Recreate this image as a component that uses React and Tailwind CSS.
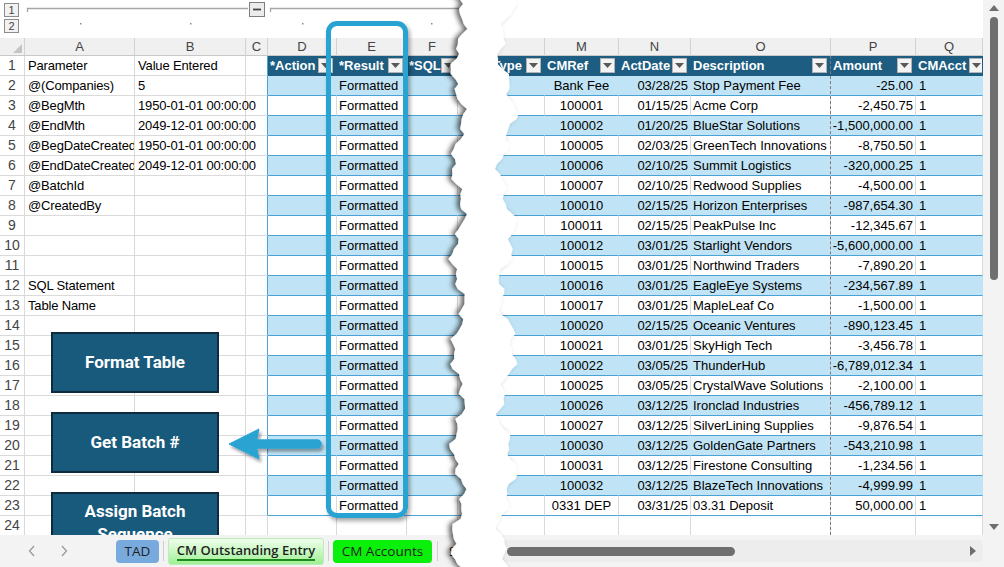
import React from 'react';

const paramNames = {
  1: 'Parameter', 2: '@(Companies)', 3: '@BegMth', 4: '@EndMth', 5: '@BegDateCreated',
  6: '@EndDateCreated', 7: '@BatchId', 8: '@CreatedBy', 12: 'SQL Statement', 13: 'Table Name',
};
const paramValues = {
  1: 'Value Entered', 2: '5', 3: '1950-01-01 00:00:00', 4: '2049-12-01 00:00:00',
  5: '1950-01-01 00:00:00', 6: '2049-12-01 00:00:00',
};

const txns = [
  ['Bank Fee', '03/28/25', 'Stop Payment Fee', '-25.00'],
  ['100001', '01/15/25', 'Acme Corp', '-2,450.75'],
  ['100002', '01/20/25', 'BlueStar Solutions', '-1,500,000.00'],
  ['100005', '02/03/25', 'GreenTech Innovations', '-8,750.50'],
  ['100006', '02/10/25', 'Summit Logistics', '-320,000.25'],
  ['100007', '02/10/25', 'Redwood Supplies', '-4,500.00'],
  ['100010', '02/15/25', 'Horizon Enterprises', '-987,654.30'],
  ['100011', '02/15/25', 'PeakPulse Inc', '-12,345.67'],
  ['100012', '03/01/25', 'Starlight Vendors', '-5,600,000.00'],
  ['100015', '03/01/25', 'Northwind Traders', '-7,890.20'],
  ['100016', '03/01/25', 'EagleEye Systems', '-234,567.89'],
  ['100017', '03/01/25', 'MapleLeaf Co', '-1,500.00'],
  ['100020', '02/15/25', 'Oceanic Ventures', '-890,123.45'],
  ['100021', '03/01/25', 'SkyHigh Tech', '-3,456.78'],
  ['100022', '03/05/25', 'ThunderHub', '-6,789,012.34'],
  ['100025', '03/05/25', 'CrystalWave Solutions', '-2,100.00'],
  ['100026', '03/12/25', 'Ironclad Industries', '-456,789.12'],
  ['100027', '03/12/25', 'SilverLining Supplies', '-9,876.54'],
  ['100030', '03/12/25', 'GoldenGate Partners', '-543,210.98'],
  ['100031', '03/12/25', 'Firestone Consulting', '-1,234.56'],
  ['100032', '03/12/25', 'BlazeTech Innovations', '-4,999.99'],
  ['0331 DEP', '03/31/25', '03.31 Deposit', '50,000.00'],
];

const rows = Array.from({ length: 24 }, (_, i) => i + 1);

const CELL = 'h-[20px] shrink-0 border-r border-b flex items-center whitespace-nowrap';
const GRID = 'border-r-[#dadada] border-b-[#dadada]';
const COLHEAD = 'h-[18px] shrink-0 border-r border-r-[#d2d2d2] flex items-center justify-center text-[13px] text-[#444]';

// table styling per sheet row
const tableCls = (n) => {
  if (n === 1) return 'bg-[#1d5d82] border-r-[#1d5d82] border-b-[#1d5d82] text-white font-bold';
  if (n >= 2 && n <= 23 && n % 2 === 0) return 'bg-[#c0e4f5] border-r-[#c0e4f5] border-b-[#4aa3d6]';
  if (n >= 2 && n <= 23) return 'border-r-[#dadada] border-b-[#4aa3d6]';
  return GRID;
};

const FilterBtn = ({ className = 'ml-auto' }) => (
  <span className={`mr-[3px] flex h-[15px] w-[15px] shrink-0 items-center justify-center border border-[#b3b3b3] bg-[#f3f3f3] ${className}`}>
    <svg width="9" height="5" viewBox="0 0 9 5"><path d="M0 0h9L4.5 5z" fill="#595959" /></svg>
  </span>
);

const LeftPane = () => (
  <div className="flex w-[472px] shrink-0 flex-col">
    {/* outline area */}
    <div className="flex h-[38px] shrink-0">
      <div className="flex w-[25px] shrink-0 flex-col gap-[2px] pl-[4px] pt-[3px]">
        {['1', '2'].map((t) => (
          <div key={t} className="flex h-[14px] w-[15px] items-center justify-center border border-[#8c8c8c] bg-[#f2f2f2] text-[11px] leading-none text-[#444]">{t}</div>
        ))}
      </div>
      <svg width="447" height="38" viewBox="0 0 447 38">
        <path d="M2.5 12V8.5H223M245.5 12V8.5H447" stroke="#a6a6a6" strokeWidth="1.3" fill="none" />
        <rect x="224.5" y="2.5" width="15" height="14" fill="#ececec" stroke="#7d7d7d" />
        <path d="M228 9.5h8" stroke="#444" strokeWidth="1.8" />
        {[55, 165, 277, 406].map((x) => <rect key={x} x={x} y="23" width="1.5" height="1.5" fill="#8a8a8a" />)}
      </svg>
    </div>
    {/* column letters */}
    <div className="flex h-[18px] shrink-0 border-b border-[#c8c8c8] bg-[#f0f0f0]">
      <div className="relative w-[25px] shrink-0 border-r border-[#d2d2d2]">
        <svg className="absolute bottom-[2px] right-[2px]" width="9" height="9"><path d="M9 0V9H0z" fill="#c4c4c4" /></svg>
      </div>
      <div className={`${COLHEAD} w-[110px]`}>A</div>
      <div className={`${COLHEAD} w-[111px]`}>B</div>
      <div className={`${COLHEAD} w-[22px]`}>C</div>
      <div className={`${COLHEAD} w-[69px]`}>D</div>
      <div className={`${COLHEAD} w-[70px]`}>E</div>
      <div className={`${COLHEAD} w-[51px]`}>F</div>
      <div className={`${COLHEAD} w-[14px]`} />
    </div>
    {rows.map((n) => {
      const t = tableCls(n);
      const inTbl = n <= 23;
      return (
        <div key={n} className="flex h-[20px] shrink-0">
          <div className={`${CELL} ${GRID} w-[25px] justify-center text-[14px] text-[#444]`}>{n}</div>
          <div className={`${CELL} ${GRID} w-[110px] overflow-hidden pl-[3px] tracking-[-0.15px]`}>{paramNames[n]}</div>
          <div className={`${CELL} ${GRID} w-[111px] pl-[3px] tracking-[-0.15px]`}>{paramValues[n]}</div>
          <div className={`${CELL} w-[22px] border-b-[#dadada] ${inTbl ? 'border-r-[#4aa3d6]' : 'border-r-[#dadada]'}`} />
          <div className={`${CELL} ${t} w-[69px] pl-[2px]`}>
            {n === 1 && (<><span>*Action</span><FilterBtn /></>)}
          </div>
          <div className={`${CELL} ${t} w-[70px] pl-[2px]`}>
            {n === 1 && (<><span>*Result</span><FilterBtn /></>)}
            {n >= 2 && n <= 23 && 'Formatted'}
          </div>
          <div className={`${CELL} ${t} w-[51px] pl-[2px]`}>
            {n === 1 && (<><span>*SQL</span><FilterBtn /></>)}
          </div>
          <div className={`${CELL} ${t} w-[14px] overflow-hidden pl-[1px]`}>{n === 1 && '*'}</div>
        </div>
      );
    })}
  </div>
);

const RightPane = () => (
  <div className="relative flex w-[503px] shrink-0 flex-col">
    <div className="h-[38px] shrink-0" />
    <div className="flex h-[18px] shrink-0 border-b border-[#c8c8c8] bg-[#f0f0f0]">
      <div className={`${COLHEAD} w-[65px]`} />
      <div className={`${COLHEAD} w-[74px]`}>M</div>
      <div className={`${COLHEAD} w-[72px]`}>N</div>
      <div className={`${COLHEAD} w-[140px]`}>O</div>
      <div className={`${COLHEAD} w-[85px]`}>P</div>
      <div className={`${COLHEAD} w-[67px]`}>Q</div>
    </div>
    {rows.map((n) => {
      const t = tableCls(n);
      const d = n >= 2 && n <= 23 ? txns[n - 2] : null;
      if (n === 1) {
        return (
          <div key={n} className="flex h-[20px] shrink-0">
            <div className={`${CELL} ${t} w-[65px] justify-end overflow-hidden`}><span>*EntryType</span><FilterBtn className="ml-[4px]" /></div>
            <div className={`${CELL} ${t} w-[74px] pl-[2px]`}><span>CMRef</span><FilterBtn /></div>
            <div className={`${CELL} ${t} w-[72px] pl-[2px]`}><span>ActDate</span><FilterBtn /></div>
            <div className={`${CELL} ${t} w-[140px] pl-[2px]`}><span>Description</span><FilterBtn /></div>
            <div className={`${CELL} ${t} w-[85px] pl-[2px]`}><span>Amount</span><FilterBtn /></div>
            <div className={`${CELL} ${t} w-[67px] overflow-hidden pl-[2px]`}><span>CMAcct</span><FilterBtn className="ml-[3px]" /></div>
          </div>
        );
      }
      return (
        <div key={n} className="flex h-[20px] shrink-0">
          <div className={`${CELL} ${t} w-[65px]`} />
          <div className={`${CELL} ${t} w-[74px] justify-center`}>{d && d[0]}</div>
          <div className={`${CELL} ${t} w-[72px] justify-end pr-[2px]`}>{d && d[1]}</div>
          <div className={`${CELL} ${t} w-[140px] overflow-hidden pl-[2px]`}>{d && d[2]}</div>
          <div className={`${CELL} ${t} w-[85px] justify-end pr-[2px]`}>{d && d[3]}</div>
          <div className={`${CELL} ${t} w-[67px] pl-[3px]`}>{d && '1'}</div>
        </div>
      );
    })}
    {/* page break */}
    <div className="absolute bottom-0 left-[350px] top-[56px] w-0 border-l border-dashed border-[#7a7a7a]" />
  </div>
);

const MacroButton = ({ top, children }) => (
  <div className={`absolute left-[51px] flex h-[61px] w-[168px] items-center justify-center border-2 border-[#0e2a3c] bg-[#185a7c] text-center font-['Roboto',sans-serif] text-[17px] font-bold leading-[23px] text-white ${top}`}>
    {children}
  </div>
);

const tornPoints = (() => {
  const left = [];
  const right = [];
  for (let y = -6; y <= 580; y += 5) {
    const lx = 458 + 5.5 * Math.sin(y / 15) + 3 * Math.sin(y / 4.3 + 1.3) + 1.5 * Math.sin(y / 2.1);
    const rx = 507 + 7 * Math.sin(y / 19 + 2) + 4 * Math.sin(y / 5.7 + 0.5) + 1.5 * Math.sin(y / 2.3 + 1);
    left.push(`${lx.toFixed(1)},${y}`);
    right.unshift(`${rx.toFixed(1)},${y}`);
  }
  return [...left, ...right].join(' ');
})();

const Chevron = ({ d }) => (
  <svg width="8" height="12" viewBox="0 0 8 12"><path d={d} stroke="#9a9a9a" strokeWidth="1.3" fill="none" /></svg>
);

export default function App() {
  return (
    <div className="relative h-[567px] w-[1004px] overflow-hidden bg-white font-['Liberation_Sans',Arial,sans-serif] text-[13px] text-black">
      <div className="flex h-[535px]">
        <div className="relative flex w-[983px] shrink-0 overflow-hidden">
          <LeftPane />
          <div className="w-[8px] shrink-0" />
          <RightPane />

          <MacroButton top="top-[332px]">Format Table</MacroButton>
          <MacroButton top="top-[412px]">Get Batch #</MacroButton>
          <MacroButton top="top-[492px]">Assign Batch<br />Sequence</MacroButton>

          {/* callout around Result column */}
          <div className="absolute left-[326px] top-[21px] h-[497px] w-[82px] rounded-[11px] border-[5px] border-[#29a3d2] shadow-[2px_3px_4px_rgba(0,0,0,0.35)]" />

          <svg className="absolute left-[220px] top-[420px] overflow-visible" width="110" height="50" viewBox="0 0 110 50">
            <defs>
              <filter id="arrowShadow" x="-20%" y="-40%" width="150%" height="200%">
                <feDropShadow dx="2" dy="3" stdDeviation="1.8" floodColor="#000" floodOpacity="0.35" />
              </filter>
            </defs>
            <g filter="url(#arrowShadow)" fill="#29a3d2">
              <path d="M36 24H97" stroke="#29a3d2" strokeWidth="9.5" strokeLinecap="round" />
              <path d="M9 24L39 9L36 24L39 39Z" strokeLinejoin="round" stroke="#29a3d2" strokeWidth="1" />
            </g>
          </svg>
        </div>

        {/* vertical scrollbar */}
        <div className="flex w-[21px] shrink-0 flex-col items-center bg-[#f3f3f3]">
          <svg className="mt-[5px]" width="10" height="6"><path d="M0 6L5 0L10 6z" fill="#6e6e6e" /></svg>
          <div className="mt-[6px] h-[263px] w-[8px] rounded-full bg-[#6f6f6f]" />
          <div className="flex-1" />
          <svg className="mb-[5px]" width="10" height="6"><path d="M0 0L5 6L10 0z" fill="#6e6e6e" /></svg>
        </div>
      </div>

      {/* sheet tabs */}
      <div className="flex h-[32px] items-center bg-[#f3f3f3] font-['Open_Sans',sans-serif] text-[13.5px] text-[#1f1f1f]">
        <div className="flex w-[116px] shrink-0 items-center gap-[24px] pl-[28px]">
          <Chevron d="M6 1L1.5 6L6 11" />
          <Chevron d="M2 1L6.5 6L2 11" />
        </div>
        <div className="flex h-[23px] w-[43px] shrink-0 items-center justify-center rounded-[4px] bg-[#78aadd]">TAD</div>
        <div className="mx-[4px] h-[20px] w-px shrink-0 bg-[#cfcfcf]" />
        <div className="flex h-[27px] w-[156px] shrink-0 items-center justify-center rounded-[3px] border border-[#bfeab9] bg-gradient-to-b from-[#effeec] to-[#9ef094] text-[13px] font-semibold">
          <span className="border-b-2 border-[#1d8a1d] leading-[17px]">CM Outstanding Entry</span>
        </div>
        <div className="mx-[4px] h-[20px] w-px shrink-0 bg-[#cfcfcf]" />
        <div className="flex h-[23px] w-[99px] shrink-0 items-center justify-center rounded-[4px] bg-[#0bf00b]">CM Accounts</div>
        <div className="mx-[5px] h-[20px] w-px shrink-0 bg-[#cfcfcf]" />
        <span className="ml-[6px]">Sheet</span>

        {/* horizontal scrollbar */}
        <div className="ml-auto mr-[21px] flex h-[22px] w-[486px] shrink-0 items-center rounded-[5px] bg-[#ededed]">
          <div className="ml-[10px] h-[9px] w-[228px] rounded-full bg-[#6f6f6f]" />
          <div className="flex-1" />
          <svg className="mr-[7px]" width="6" height="10"><path d="M0 0L6 5L0 10z" fill="#6e6e6e" /></svg>
        </div>
      </div>

      {/* torn-paper break between column groups */}
      <svg className="pointer-events-none absolute left-0 top-0" width="1004" height="567" viewBox="0 0 1004 567">
        <defs>
          <filter id="tornShadow" x="-30%" y="-5%" width="160%" height="110%">
            <feDropShadow dx="-3.5" dy="0" stdDeviation="2.5" floodColor="#000" floodOpacity="0.6" />
          </filter>
        </defs>
        <polygon points={tornPoints} fill="#fff" filter="url(#tornShadow)" />
      </svg>
    </div>
  );
}
